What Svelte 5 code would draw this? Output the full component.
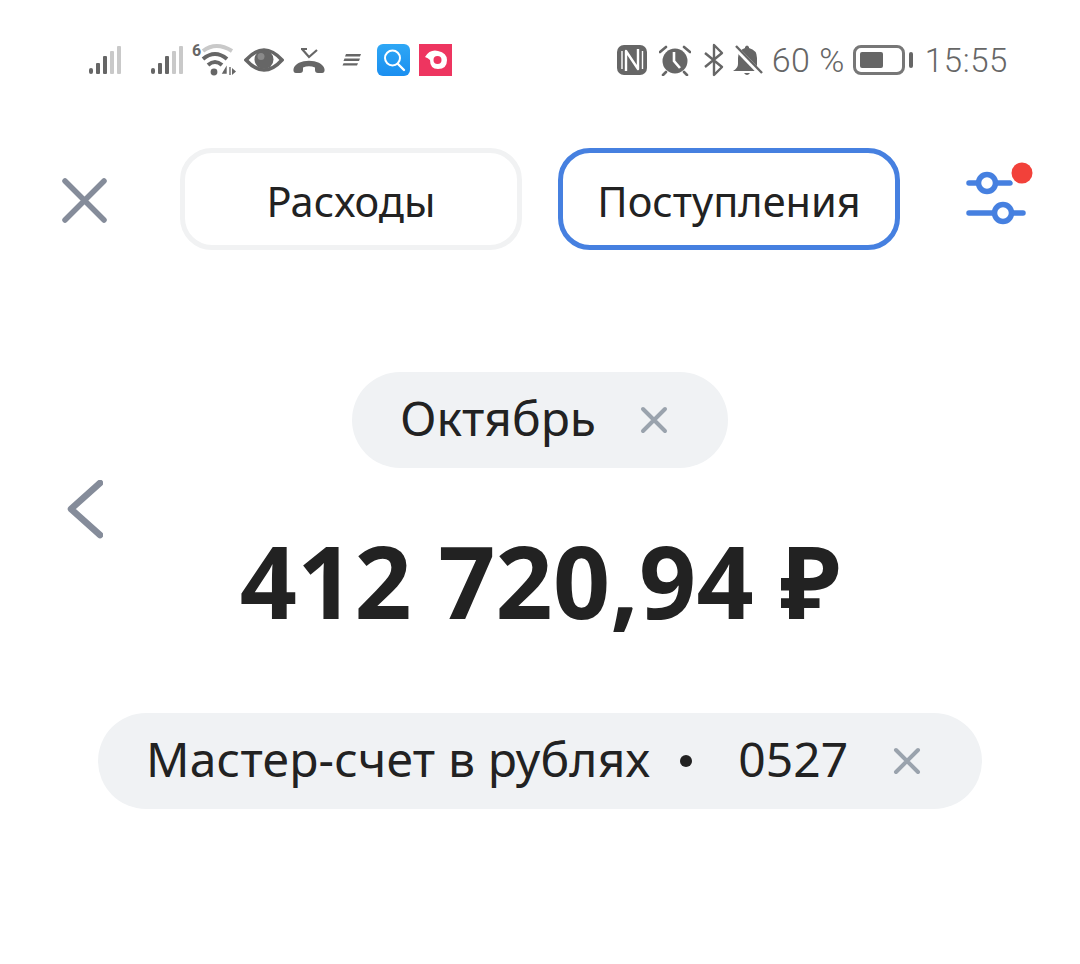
<script>
  let tab = $state("in");
</script>

<main class="screen">
  <div class="status">
    <div class="status-left">
      <svg class="signal" width="36" height="32" viewBox="0 0 36 32">
        <rect x="1" y="24" width="4" height="6" rx="2" fill="#666"/>
        <rect x="8" y="19" width="4" height="11" rx="1" fill="#666"/>
        <rect x="15" y="12" width="4" height="18" rx="1" fill="#666"/>
        <rect x="22" y="7" width="4" height="23" rx="1" fill="#c9c9c9"/>
        <rect x="29" y="2" width="4" height="28" rx="1" fill="#c9c9c9"/>
      </svg>
      <svg class="signal second" width="36" height="32" viewBox="0 0 36 32">
        <rect x="1" y="24" width="4" height="6" rx="2" fill="#666"/>
        <rect x="8" y="19" width="4" height="11" rx="1" fill="#666"/>
        <rect x="15" y="12" width="4" height="18" rx="1" fill="#666"/>
        <rect x="22" y="7" width="4" height="23" rx="1" fill="#c9c9c9"/>
        <rect x="29" y="2" width="4" height="28" rx="1" fill="#c9c9c9"/>
      </svg>
      <svg class="wifi" width="46" height="36" viewBox="0 0 46 36">
        <text x="0" y="14" font-size="16" font-weight="700" fill="#666" font-family="Roboto, sans-serif">6</text>
        <path d="M11 9 Q24 -1 40 9" fill="none" stroke="#c9c9c9" stroke-width="4"/>
        <path d="M11 17 Q23 7 35 17" fill="none" stroke="#666" stroke-width="4"/>
        <path d="M16 23 Q23 17 30 23" fill="none" stroke="#666" stroke-width="4"/>
        <circle cx="22" cy="30" r="3.4" fill="#666"/>
        <path d="M31 31 l3 -5 v5 z M38 25 v8" fill="#666" stroke="#666" stroke-width="1.4"/>
        <path d="M40 26 l4 3.5 -4 3.5z" fill="#666"/>
      </svg>
      <svg class="eye" width="40" height="28" viewBox="0 0 40 28">
        <path d="M2 14 Q20 -6 38 14 Q20 34 2 14Z" fill="none" stroke="#666" stroke-width="3.6"/>
        <circle cx="20" cy="13.5" r="9.5" fill="#666"/>
        <circle cx="17" cy="10.5" r="3.5" fill="#8a8a8a"/>
      </svg>
      <svg class="call" width="32" height="32" viewBox="0 0 32 32">
        <path d="M8 5 H14 M9 5 L16 13 L24 6" fill="none" stroke="#666" stroke-width="2.2"/>
        <path d="M0.5 25 C3 14 29 14 31.5 25 Q32 29 29 29 L25 29 Q22 29 22 26 L22 23.5 Q16 21 10 23.5 L10 26 Q10 29 7 29 L3 29 Q0 29 0.5 25Z" fill="#666"/>
      </svg>
      <svg class="stack" width="20" height="14" viewBox="0 0 20 14">
        <path d="M4 1 H19 L18 3.4 H3Z M2.5 5.6 H18 L17 8 H1.5Z M1.5 10.2 H16 L15 12.6 H0.5Z" fill="#666"/>
      </svg>
      <div class="app-icon search">
        <svg width="32" height="32" viewBox="0 0 32 32">
          <circle cx="14.5" cy="14" r="7.5" fill="none" stroke="#fff" stroke-width="2"/>
          <path d="M20 20 L26 26" stroke="#fff" stroke-width="2.4" stroke-linecap="round"/>
        </svg>
      </div>
      <div class="app-icon record">
        <svg width="32" height="30" viewBox="0 0 32 30">
          <path d="M5 12 Q10 4 18 6 Q27 8 27 15 Q27 24 18 24 Q10 24 10 15 Q8 13 5 12Z" fill="#fff"/>
          <circle cx="17.5" cy="15" r="4" fill="#ee3560"/>
        </svg>
      </div>
    </div>
    <div class="status-right">
      <svg class="nfc" width="30" height="30" viewBox="0 0 30 30">
        <rect width="30" height="30" rx="7" fill="#666"/>
        <path d="M9 26 V6 L21 24 V4" fill="none" stroke="#fff" stroke-width="2.4" stroke-linejoin="round"/>
        <path d="M5 6 V24 M25.5 6 V24" stroke="#fff" stroke-width="1.4"/>
      </svg>
      <svg class="alarm" width="32" height="32" viewBox="0 0 32 32">
        <circle cx="16" cy="17" r="12.5" fill="#666"/>
        <path d="M15 8 V17 L21 24" fill="none" stroke="#fff" stroke-width="2.6"/>
        <path d="M1 8 L7 3 M31 8 L25 3 M7 28 L4 31 M25 28 L28 31" stroke="#666" stroke-width="2.6" stroke-linecap="round"/>
      </svg>
      <svg class="bt" width="22" height="34" viewBox="0 0 22 34">
        <path d="M2 10 L19 24 L11 32 V2 L19 10 L2 24" fill="none" stroke="#666" stroke-width="2.4" stroke-linejoin="round"/>
      </svg>
      <svg class="bell" width="32" height="32" viewBox="0 0 32 32">
        <path d="M1 27 Q6 24 6 20 V14 Q6 6 13 4 V3 Q15 0 17 3 V4 Q25 6 25 14 V27Z" fill="#666"/>
        <path d="M12 29 Q15 33 18 29Z" fill="#666"/>
        <path d="M2 2 L30 31" stroke="#fff" stroke-width="5"/>
        <path d="M4 2 L30 29" stroke="#666" stroke-width="2.4"/>
      </svg>
      <span class="pct">60 %</span>
      <div class="battery"><div class="battery-fill"></div></div>
      <div class="battery-tip"></div>
      <span class="time">15:55</span>
    </div>
  </div>

  <div class="tabs">
    <button class="close" aria-label="Закрыть">
      <svg width="46" height="46" viewBox="0 0 46 46">
        <path d="M3 3 L42 42 M42 3 L3 42" stroke="#858c9a" stroke-width="5.5" stroke-linecap="round"/>
      </svg>
    </button>
    <button class="tab" class:active={tab === "out"} onclick={() => (tab = "out")}>Расходы</button>
    <button class="tab" class:active={tab === "in"} onclick={() => (tab = "in")}>Поступления</button>
    <button class="filter" aria-label="Фильтр">
      <svg width="68" height="64" viewBox="0 0 68 64">
        <path d="M3 21 H44 M3 51 H57" stroke="#4680e0" stroke-width="5.5" stroke-linecap="round"/>
        <circle cx="21" cy="21" r="8.5" fill="#fff" stroke="#4680e0" stroke-width="5.5"/>
        <circle cx="37" cy="51" r="8.5" fill="#fff" stroke="#4680e0" stroke-width="5.5"/>
        <circle cx="56" cy="11" r="13" fill="#fff"/>
        <circle cx="56" cy="11" r="10.5" fill="#f2413a"/>
      </svg>
    </button>
  </div>

  <div class="month-row">
    <div class="pill month">
      <span class="label">Октябрь</span>
      <svg class="x" width="28" height="28" viewBox="0 0 28 28">
        <path d="M3 3 L25 25 M25 3 L3 25" stroke="#9aa3ad" stroke-width="4" stroke-linecap="round"/>
      </svg>
    </div>
  </div>

  <button class="back" aria-label="Назад">
    <svg width="36" height="60" viewBox="0 0 36 60">
      <path d="M33 3 L4 29 L33 55" fill="none" stroke="#858c9a" stroke-width="6.5" stroke-linecap="round" stroke-linejoin="round"/>
    </svg>
  </button>

  <div class="amount">412 720,94 ₽</div>

  <div class="account-row">
    <div class="pill account">
      <span class="label name">Мастер-счет в рублях</span>
      <span class="dot"></span>
      <span class="label">0527</span>
      <svg class="x" width="28" height="28" viewBox="0 0 28 28">
        <path d="M3 3 L25 25 M25 3 L3 25" stroke="#9aa3ad" stroke-width="4" stroke-linecap="round"/>
      </svg>
    </div>
  </div>
</main>

<style>
  :global(body) {
    margin: 0;
    background: #fff;
  }

  .screen {
    width: 1080px;
    height: 964px;
    overflow: hidden;
    font-family: "Noto Sans", Roboto, sans-serif;
    color: #222;
    background: #fff;
  }

  button {
    font-family: inherit;
    background: none;
    border: none;
    padding: 0;
  }

  .status {
    display: flex;
    justify-content: space-between;
    align-items: center;
    height: 48px;
    padding: 36px 72px 0 88px;
    color: #666;
  }

  .status-left, .status-right {
    display: flex;
    align-items: center;
  }

  .signal.second { margin-left: 26px; }
  .wifi { margin-left: 6px; }
  .eye { margin-left: 6px; }
  .call { margin-left: 9px; }
  .stack { margin-left: 17px; }

  .app-icon {
    width: 33px;
    height: 32px;
    display: flex;
    align-items: center;
    justify-content: center;
  }

  .search {
    margin-left: 15px;
    border-radius: 6px;
    background: linear-gradient(180deg, #2ea7f5, #1b8ff0);
  }

  .record {
    margin-left: 9px;
    background: #ee3560;
  }

  .nfc { margin-right: 12px; }
  .alarm { margin-right: 12px; }
  .bt { margin-right: 7px; }
  .bell { margin-right: 8px; }

  .pct {
    font-size: 34px;
    font-family: Roboto, sans-serif;
    font-weight: 300;
    margin-right: 8px;
    letter-spacing: 0.5px;
  }

  .battery {
    border: 3px solid #777;
    border-radius: 8px;
    padding: 4px;
    width: 38px;
    height: 16px;
    display: flex;
  }

  .battery-fill {
    width: 23px;
    background: #666;
    border-radius: 2px;
  }

  .battery-tip {
    width: 4px;
    height: 16px;
    margin-left: 4px;
    background: #666;
    border-radius: 2px;
  }

  .time {
    font-size: 33px;
    font-family: Roboto, sans-serif;
    font-weight: 300;
    margin-left: 12px;
    letter-spacing: 0.6px;
  }

  .tabs {
    display: flex;
    align-items: center;
    height: 102px;
    margin-top: 64px;
    padding-left: 62px;
  }

  .close {
    width: 46px;
    height: 46px;
    margin-right: 72px;
    margin-top: 3px;
  }

  .tab {
    width: 342px;
    height: 102px;
    box-sizing: border-box;
    border: 5px solid #f1f2f3;
    border-radius: 32px;
    padding-top: 3px;
    font-size: 41.5px;
    color: #222;
    background: #fff;
  }

  .tab + .tab { margin-left: 36px; }

  .tab.active { border-color: #4680e0; }

  .filter {
    width: 68px;
    height: 64px;
    margin-left: 66px;
    margin-top: -10px;
  }

  .month-row, .account-row {
    display: flex;
    justify-content: center;
  }

  .month-row { margin-top: 122px; }

  .pill {
    display: flex;
    align-items: center;
    height: 96px;
    border-radius: 48px;
    background: #f0f2f4;
    font-size: 48px;
    color: #222;
    box-sizing: border-box;
  }

  .label { padding-bottom: 6px; }

  .name { letter-spacing: 0.2px; }

  .month {
    width: 376px;
    padding: 0 0 0 48px;
  }

  .month .x { margin-left: 44px; }

  .back {
    display: block;
    margin: 12px 0 0 67px;
    width: 36px;
    height: 60px;
  }

  .amount {
    margin-top: -20px;
    text-align: center;
    font-size: 100px;
    font-weight: 700;
    line-height: 120px;
    letter-spacing: 0.2px;
    color: #222;
  }

  .account-row { margin-top: 73px; }

  .account {
    width: 884px;
    padding-left: 48px;
  }

  .dot {
    width: 12px;
    height: 12px;
    border-radius: 50%;
    background: #222;
    margin: 0 46px 0 30px;
  }

  .account .x { margin-left: 45px; }
</style>
